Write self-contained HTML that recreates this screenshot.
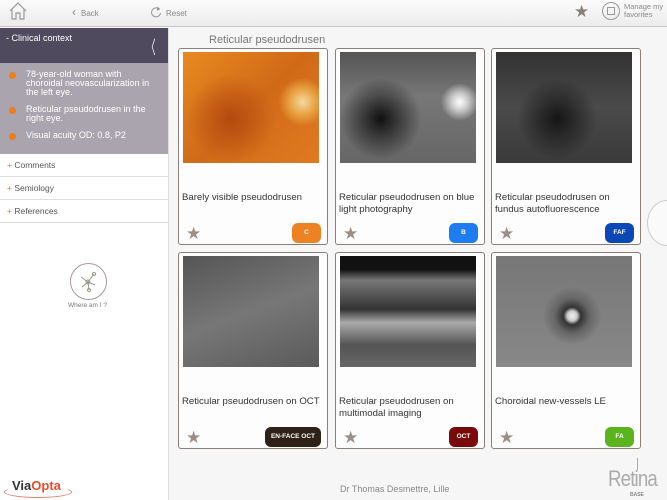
<!DOCTYPE html>
<html><head><meta charset="utf-8"><style>
*{margin:0;padding:0;box-sizing:border-box}
body{width:667px;height:500px;overflow:hidden;background:#f6f6f6;font-family:"Liberation Sans",sans-serif;position:relative;color:#333}
.hdr{position:absolute;left:0;top:0;width:667px;height:27px;background:linear-gradient(#fbfbfb,#ececec);border-bottom:1px solid #c8c8c8}
.hdr span{position:absolute;font-size:8px;color:#888;top:9px}
.side{position:absolute;left:0;top:28px;width:169px;height:472px;background:#fff;border-right:1px solid #ddd}
.cc{height:35px;background:#4f4a5e;color:#fff;font-size:9px;padding:5px 6px;position:relative}
.cc b{position:absolute;right:8px;top:6px;font-weight:normal;font-size:18px;color:#fff;transform:scaleX(.5)}
.ctx{height:91px;background:#a9a4ae;color:#fff;font-size:9px;line-height:9px;padding:7px 12px 0 26px}
.ctx p{position:relative;margin-bottom:8px}
.ctx p:before{content:"";position:absolute;left:-17px;top:2px;width:7px;height:7px;border-radius:50%;background:#f07c1a}
.it{height:23px;border-bottom:1px solid #ddd;font-size:8.5px;color:#555;padding:6px 7px}
.it i{color:#f07c1a;font-style:normal}
.card{position:absolute;width:150px;height:197px;border:1px solid #8a7f7a;border-radius:3px;background:#fdfdfd}
.img{position:absolute;left:4px;top:3px;width:136px;height:111px}
.t{position:absolute;left:3px;top:143px;font-size:9.6px;line-height:12px;color:#333;width:145px}
.st{position:absolute;left:7px;top:175px;color:#9a8e85;font-size:17px}
.bd{position:absolute;right:6px;top:174px;height:20px;border-radius:6px;color:#fff;font-size:6.5px;font-weight:bold;text-align:center;line-height:20px;padding:0 6px;min-width:29px}
</style></head><body>
<div class="hdr">
<svg style="position:absolute;left:8px;top:1px" width="20" height="20" viewBox="0 0 20 20" fill="none" stroke="#999" stroke-width="1.2"><path d="M2 10 L10 2 L18 10 M4 8 V18 H8 V12 H12 V18 H16 V8"/></svg>
<span style="left:72px;font-size:12px;top:5px">‹</span><span style="left:81px">Back</span>
<svg style="position:absolute;left:150px;top:6px" width="12" height="12" viewBox="0 0 12 12" fill="none" stroke="#999"><path d="M9 3 A4.5 4.5 0 1 0 10.5 7"/><path d="M7 1 L9.5 3 L7 4.5" fill="#999"/></svg>
<span style="left:166px">Reset</span>
<span style="left:574px;top:2px;font-size:17px;color:#8a7f7a">★</span>
<div style="position:absolute;left:602px;top:2px;width:18px;height:18px;border:1px solid #999;border-radius:50%"></div>
<div style="position:absolute;left:607px;top:7px;width:8px;height:8px;border:1px solid #999"></div>
<span style="left:624px;top:3px;line-height:8px;font-size:7.5px">Manage my<br>favorites</span>
</div>
<div class="side">
<div class="cc">- Clinical context<b>〈</b></div>
<div class="ctx"><p>78-year-old woman with choroidal neovascularization in the left eye.</p><p>Reticular pseudodrusen in the right eye.</p><p>Visual acuity OD: 0.8, P2</p></div>
<div class="it"><i>+</i> Comments</div>
<div class="it"><i>+</i> Semiology</div>
<div class="it"><i>+</i> References</div>
<div style="position:absolute;left:70px;top:235px;width:37px;height:37px;border:1px solid #a99;border-radius:50%"></div>
<svg style="position:absolute;left:76px;top:241px" width="25" height="25" viewBox="0 0 25 25" fill="none" stroke="#998" stroke-width="1"><circle cx="12" cy="13" r="2"/><path d="M12 13 L18 5 M12 13 L5 8 M12 13 L13 21 M12 13 L19 16 M12 13 L6 18"/><circle cx="18" cy="5" r="1.5"/><circle cx="13" cy="21" r="1.5"/></svg>
<div style="position:absolute;left:0;width:175px;text-align:center;top:274px;font-size:6.5px;color:#777">Where am I ?</div>
<div style="position:absolute;left:12px;top:450px;font-size:13px;font-weight:bold;color:#333">Via<span style="color:#e84b2a">Opta</span></div>
<div style="position:absolute;left:4px;top:458px;width:68px;height:12px;border:1px solid #e0806a;border-radius:50%;border-top-color:transparent"></div>
</div>
<div style="position:absolute;left:209px;top:34px;font-size:11px;color:#777">Reticular pseudodrusen</div>
<div class="card" style="left:178px;top:48px"><div class="img" style="background:radial-gradient(circle at 88% 45%,#f4d9a0 0,#e8a040 10%,transparent 18%),radial-gradient(circle at 35% 60%,#b44a10,transparent 40%),linear-gradient(135deg,#e88a20,#d06a18 50%,#e07a20)"></div><div class="t">Barely visible pseudodrusen</div><div class="st">★</div><div class="bd" style="background:#ee8222">C</div></div>
<div class="card" style="left:335px;top:48px"><div class="img" style="background:radial-gradient(circle at 88% 45%,#fff 0,#ccc 6%,transparent 14%),radial-gradient(circle at 30% 60%,#111,transparent 35%),linear-gradient(#555,#777 40%,#666)"></div><div class="t">Reticular pseudodrusen on blue light photography</div><div class="st">★</div><div class="bd" style="background:#1e7bf0">B</div></div>
<div class="card" style="left:491px;top:48px"><div class="img" style="background:radial-gradient(circle at 45% 60%,#151515,transparent 40%),linear-gradient(#333,#4a4a4a 50%,#3a3a3a)"></div><div class="t" style="width:135px">Reticular pseudodrusen on fundus autofluorescence</div><div class="st">★</div><div class="bd" style="background:#0b47b5">FAF</div></div>
<div class="card" style="left:178px;top:252px"><div class="img" style="background:linear-gradient(160deg,#555,#777 50%,#5a5a5a)"></div><div class="t">Reticular pseudodrusen on OCT</div><div class="st">★</div><div class="bd" style="background:#2e2218">EN-FACE OCT</div></div>
<div class="card" style="left:335px;top:252px"><div class="img" style="background:linear-gradient(#111 0,#111 12%,#777 22%,#555 35%,#333 48%,#aaa 60%,#888 68%,#555 80%,#666)"></div><div class="t">Reticular pseudodrusen on multimodal imaging</div><div class="st">★</div><div class="bd" style="background:#7a0a0a">OCT</div></div>
<div class="card" style="left:491px;top:252px"><div class="img" style="background:radial-gradient(circle at 56% 54%,#eee 0,#ccc 5%,#333 9%,#666 18%,transparent 30%),linear-gradient(#777,#888)"></div><div class="t">Choroidal new-vessels LE</div><div class="st">★</div><div class="bd" style="background:#5bb31e">FA</div></div>
<div style="position:absolute;left:647px;top:200px;width:40px;height:46px;border:1px solid #ccc;border-radius:50%;background:#fafafa"></div>
<div style="position:absolute;left:340px;top:484px;font-size:9px;color:#888">Dr Thomas Desmettre, Lille</div>
<div style="position:absolute;left:608px;top:466px;font-size:22px;color:#aaa;letter-spacing:-1px;transform:scaleX(.85);transform-origin:left">Retina</div>
<div style="position:absolute;left:637px;top:458px;width:1px;height:12px;background:#aaa"></div>
<div style="position:absolute;left:630px;top:492px;font-size:5px;color:#888;font-weight:bold">BASE</div>
</body></html>
